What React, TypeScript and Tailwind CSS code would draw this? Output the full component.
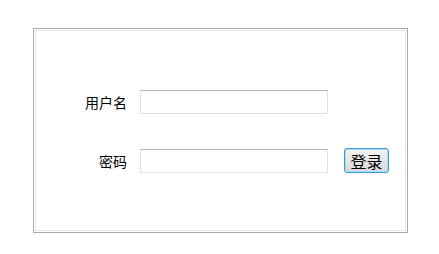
export default function App() {
  const font = { fontFamily: '"Noto Sans CJK SC", "Noto Sans", sans-serif' }
  return (
    <div className="h-[254px] w-[439px] bg-white pl-[33px] pt-[28px]" style={font}>
      <div className="h-[205px] w-[375px] border border-[#a9a9a9] p-px">
        <div className="h-full w-full border border-[#e6e6e6] pt-[59px]">
          <div className="flex items-center">
            <span className="w-[104px] pr-[13px] text-right text-[14px] leading-[24px] text-black">用户名</span>
            <input className="h-[24px] w-[188px] border border-[#e0e0e0] border-t-[#b4b4b4] bg-white outline-none" />
          </div>
          <div className="mt-[34px] flex items-center">
            <span className="w-[104px] pr-[13px] text-right text-[14px] leading-[24px] text-black">密码</span>
            <input type="password" className="h-[24px] w-[188px] border border-[#e0e0e0] border-t-[#b4b4b4] bg-white outline-none" />
            <button
              type="button"
              className="ml-[16px] h-[25px] w-[45px] rounded-[3px] border border-[#3c9ad9] bg-gradient-to-b from-[#f4f4f4] to-[#d9d9d9] text-[16px] leading-none text-black shadow-[inset_0_0_0_1px_#a7dcf5]"
            >
              登录
            </button>
          </div>
        </div>
      </div>
    </div>
  )
}
